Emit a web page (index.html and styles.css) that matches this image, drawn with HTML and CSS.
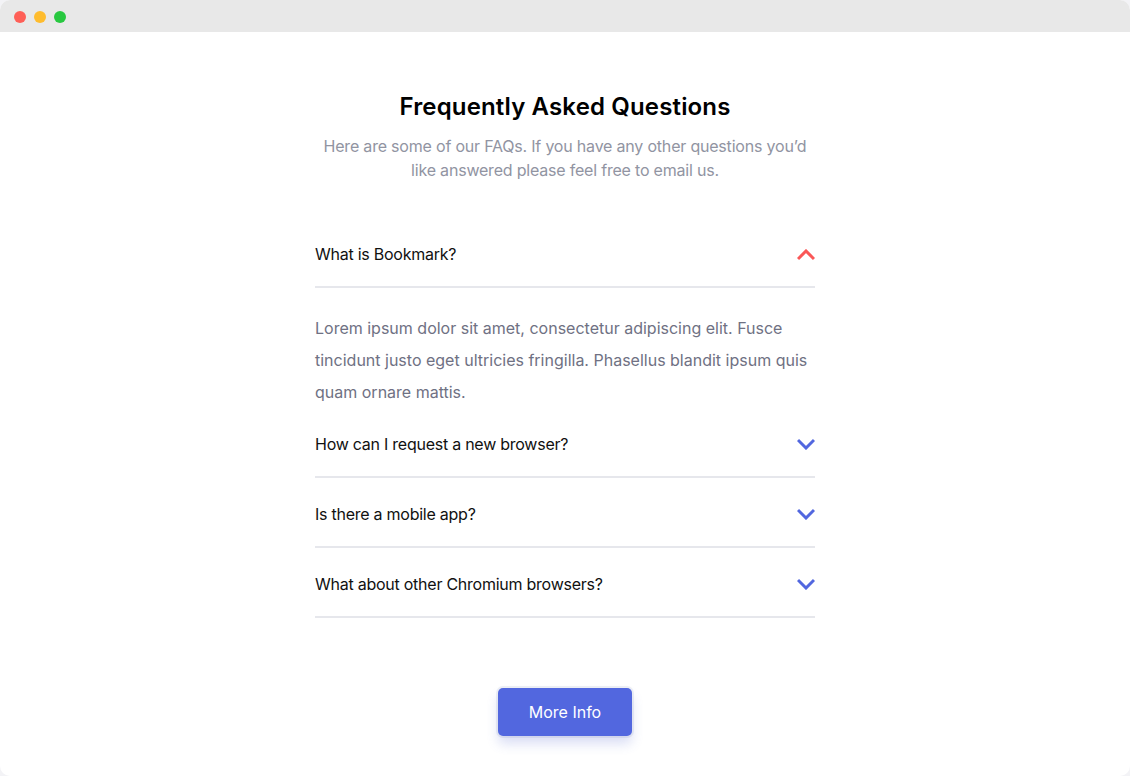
FILE: index.html
```html
<!DOCTYPE html>
<html lang="en">
<head>
<meta charset="utf-8">
<title>FAQ</title>
<link rel="stylesheet" href="styles.css">
</head>
<body>
<div class="window">
  <div class="titlebar">
    <span class="dot red"></span>
    <span class="dot yellow"></span>
    <span class="dot green"></span>
  </div>
  <main class="page">
    <section class="faq">
      <h1 class="faq-title">Frequently Asked Questions</h1>
      <p class="faq-intro">Here are some of our FAQs. If you have any other questions you’d like answered please feel free to email us.</p>
      <div class="faq-list">
        <div class="faq-item open">
          <div class="faq-q">
            <span>What is Bookmark?</span>
            <svg class="chev up" width="18" height="12" viewBox="0 0 18 12"><path d="M1 10l8-8 8 8" fill="none" stroke-width="3"/></svg>
          </div>
        </div>
        <p class="faq-a">Lorem ipsum dolor sit amet, consectetur adipiscing elit. Fusce tincidunt justo eget ultricies fringilla. Phasellus blandit ipsum quis quam ornare mattis.</p>
        <div class="faq-item">
          <div class="faq-q">
            <span>How can I request a new browser?</span>
            <svg class="chev" width="18" height="12" viewBox="0 0 18 12"><path d="M1 2l8 8 8-8" fill="none" stroke-width="3"/></svg>
          </div>
        </div>
        <div class="faq-item">
          <div class="faq-q">
            <span>Is there a mobile app?</span>
            <svg class="chev" width="18" height="12" viewBox="0 0 18 12"><path d="M1 2l8 8 8-8" fill="none" stroke-width="3"/></svg>
          </div>
        </div>
        <div class="faq-item">
          <div class="faq-q">
            <span>What about other Chromium browsers?</span>
            <svg class="chev" width="18" height="12" viewBox="0 0 18 12"><path d="M1 2l8 8 8-8" fill="none" stroke-width="3"/></svg>
          </div>
        </div>
      </div>
      <button class="more-btn" type="button">More Info</button>
    </section>
  </main>
</div>
</body>
</html>
```

FILE: styles.css
```css
* { box-sizing: border-box; }
html, body { margin: 0; padding: 0; }
body {
  background: #f3f3f6;
  font-family: Inter, "Open Sans", "Liberation Sans", sans-serif;
  width: 1130px;
  height: 776px;
  overflow: hidden;
}
.window {
  width: 1130px;
  height: 776px;
  background: #ffffff;
  border-radius: 10px;
  overflow: hidden;
  display: flex;
  flex-direction: column;
}
.titlebar {
  height: 32px;
  background: #e8e8e8;
  display: flex;
  align-items: center;
  gap: 8px;
  padding-left: 14px;
  padding-top: 2px;
  flex-shrink: 0;
}
.dot { width: 12px; height: 12px; border-radius: 50%; }
.red { background: #fe5f57; }
.yellow { background: #febc2e; }
.green { background: #28c840; }
.page {
  flex: 1;
  display: flex;
  justify-content: center;
}
.faq {
  width: 500px;
  margin-top: 59px;
  display: flex;
  flex-direction: column;
  align-items: center;
}
.faq-title {
  margin: 0;
  font-size: 24px;
  line-height: 32px;
  font-weight: 600;
  color: #000;
  letter-spacing: 0.15px;
}
.faq-intro {
  margin: 11px 0 0;
  font-size: 16px;
  line-height: 24px;
  color: #9194a2;
  text-align: center;
  letter-spacing: -0.2px;
}
.faq-list {
  width: 100%;
  margin-top: 36px;
}
.faq-item {
  border-bottom: 2px solid #e6e7ec;
}
.faq-q {
  display: flex;
  justify-content: space-between;
  align-items: center;
  padding: 24px 0 20px;
  font-size: 16px;
  line-height: 24px;
  color: #111;
  letter-spacing: -0.25px;
}
.chev { stroke: #5267df; margin-top: -1px; }
.chev.up { stroke: #fa5757; margin-top: 2px; }
.faq-a {
  margin: 24px 0 0;
  font-size: 16px;
  line-height: 32px;
  color: #6f7183;
  letter-spacing: 0;
}
.more-btn {
  margin-top: 70px;
  width: 134px;
  height: 48px;
  border: none;
  border-radius: 5px;
  background: #5267df;
  color: #fff;
  font-family: inherit;
  font-size: 16px;
  box-shadow: 0 8px 12px rgba(73, 93, 207, 0.2), 0 0 0 2px #eef0f5;
}
```
